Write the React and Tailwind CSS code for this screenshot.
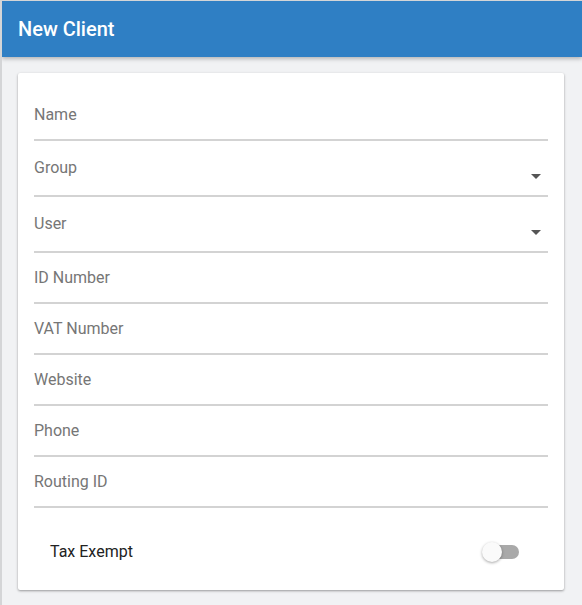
const FIELDS = [
  { label: 'Name' },
  { label: 'Group', select: true },
  { label: 'User', select: true },
  { label: 'ID Number' },
  { label: 'VAT Number' },
  { label: 'Website' },
  { label: 'Phone' },
  { label: 'Routing ID' },
];

function Field({ label, select }) {
  if (select) {
    return (
      <div className="relative pt-[17px] pb-[17px] border-b-2 border-[#d3d3d3]">
        <div className="text-[16px] leading-5 text-[#767676]">{label}</div>
        {/* dropdown arrow */}
        <span className="absolute right-[7px] bottom-[16px] w-0 h-0 border-l-[5px] border-r-[5px] border-t-[5px] border-l-transparent border-r-transparent border-t-[#555]"></span>
      </div>
    );
  }
  return (
    <div className="pt-[15px] pb-[14px] border-b-2 border-[#d3d3d3]">
      <div className="text-[16px] leading-5 text-[#767676]">{label}</div>
    </div>
  );
}

export default function App() {
  return (
    <div
      className="w-[582px] h-[605px] overflow-hidden bg-[#f1f2f4] border-l-2 border-t border-[#d4d5d7] flex flex-col"
      style={{ fontFamily: 'Roboto, "Liberation Sans", sans-serif' }}
    >
      {/* Header */}
      <div className="h-[56px] shrink-0 bg-[#2f7fc4] flex items-center pl-4 shadow-[0_2px_4px_rgba(0,0,0,0.25)] relative z-10">
        <h1 className="text-white text-[20px] font-medium">New Client</h1>
      </div>

      {/* Content */}
      <div className="flex-1 pt-4 pl-4 pr-[18px]">
        <div className="bg-white rounded-[2px] shadow-[0_1px_3px_rgba(0,0,0,0.22),0_1px_2px_rgba(0,0,0,0.18)] px-4 pt-[17px] pb-[14px]">
          {FIELDS.map((f) => (
            <Field key={f.label} {...f} />
          ))}

          {/* Tax exempt toggle */}
          <div className="mt-5 h-12 flex items-center justify-between pl-4 pr-[29px]">
            <span className="text-[16px] text-[#222]">Tax Exempt</span>
            <div className="relative w-[34px] h-5 flex items-center">
              <div className="w-[34px] h-[14px] rounded-full bg-[#a9a9a9]"></div>
              <div className="absolute left-[-3px] top-0 w-5 h-5 rounded-full bg-[#fafafa] shadow-[0_1px_3px_rgba(0,0,0,0.35)]"></div>
            </div>
          </div>
        </div>
      </div>
    </div>
  );
}
